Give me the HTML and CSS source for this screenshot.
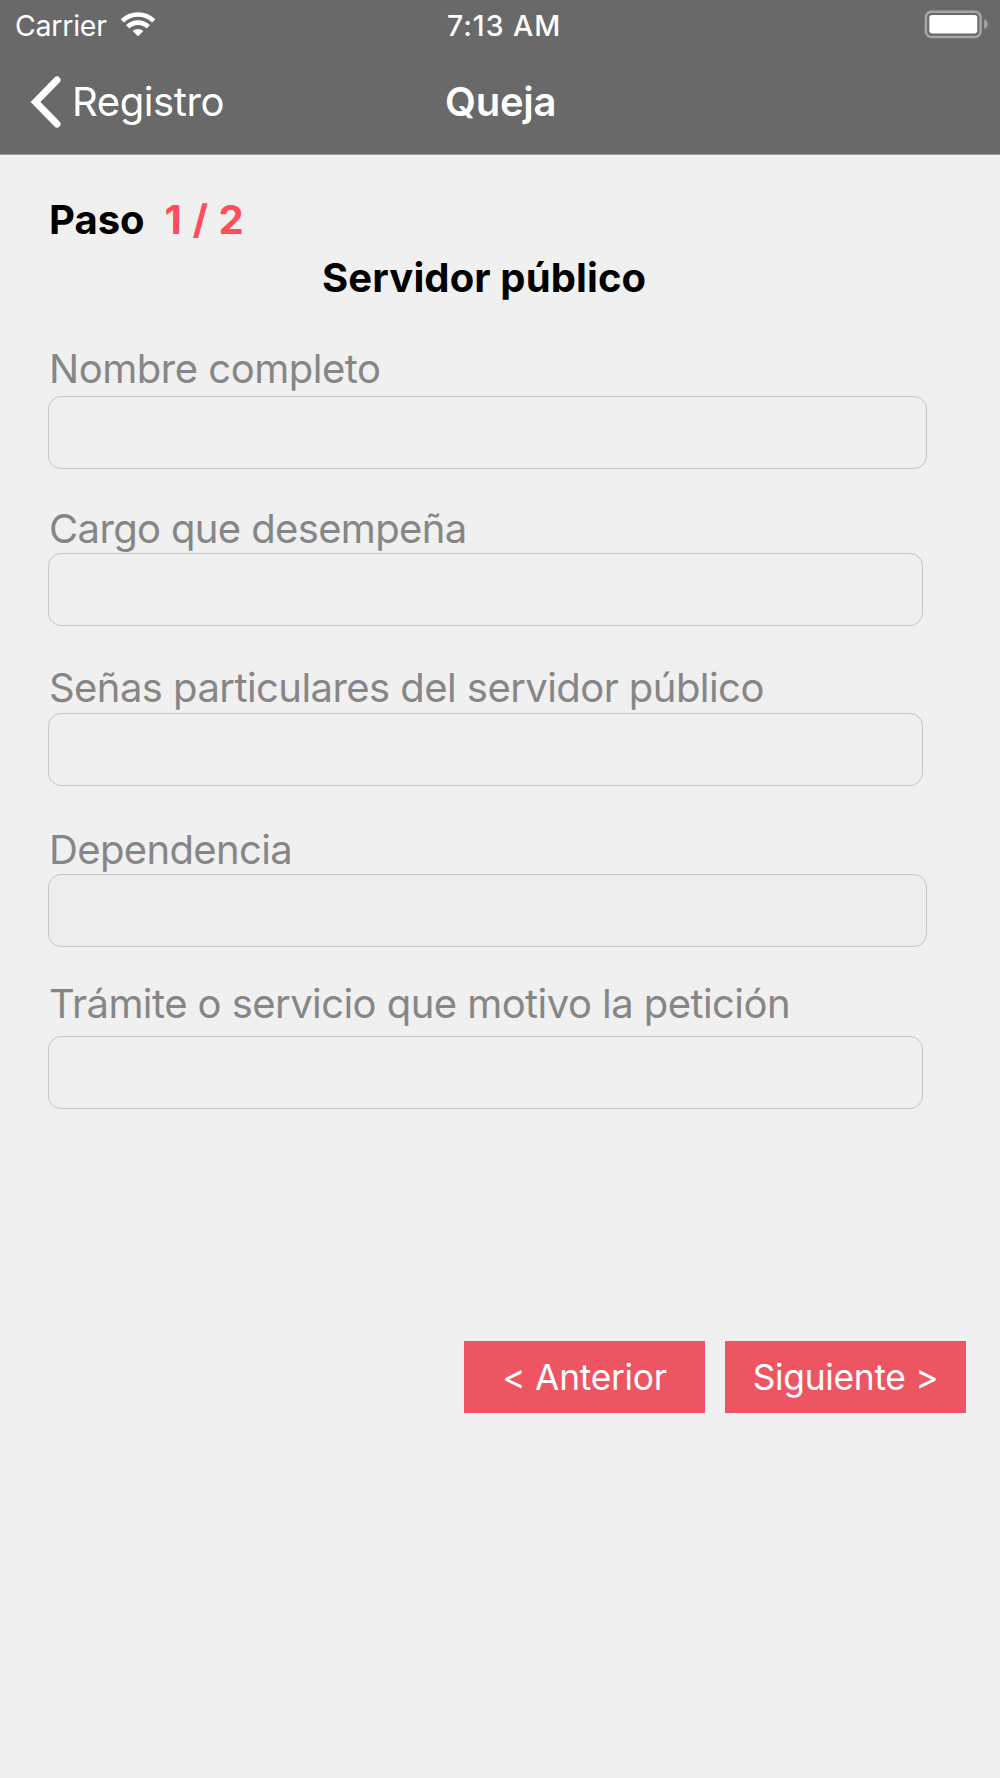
FILE: index.html
```html
<!DOCTYPE html>
<html lang="es">
<head>
<meta charset="utf-8">
<title>Queja</title>
<link rel="stylesheet" href="styles.css">
</head>
<body>
<header class="header">
  <div class="status">
    <div class="status-left">
      <span class="carrier">Carrier</span>
      <svg class="wifi" width="36" height="26" viewBox="0 0 36 26" fill="none" stroke="#fff" stroke-width="4.7">
        <path d="M2.3 9.9A22.4 22.4 0 0 1 33.7 9.9"/>
        <path d="M7.7 15.8A14.8 14.8 0 0 1 28.3 15.8"/>
        <path d="M12.7 20.1A7.6 7.6 0 0 1 23.3 20.1L18.6 24.8Q18 25.2 17.4 24.8Z" fill="#fff" stroke="none"/>
      </svg>
    </div>
    <span class="time">7:13 AM</span>
    <svg class="battery" width="65" height="30" viewBox="0 0 65 30">
      <rect x="1.9" y="1.7" width="54.6" height="25.2" rx="5.5" fill="none" stroke="#a6a6a6" stroke-width="2.5"/>
      <rect x="5.3" y="5" width="48" height="18.4" rx="2.8" fill="#fff"/>
      <path d="M60.2 9.3Q63.6 10.8 63.6 14.2T60.2 19.1Z" fill="#a6a6a6"/>
    </svg>
  </div>
  <nav class="nav">
    <a class="back">
      <svg width="34" height="54" viewBox="0 0 34 54" fill="none" stroke="#fff" stroke-width="7" stroke-linecap="round">
        <path d="M29 5L7.5 27L29 49"/>
      </svg>
      <span>Registro</span>
    </a>
    <h1 class="nav-title">Queja</h1>
  </nav>
</header>
<main class="content">
  <p class="step">Paso <span class="step-count">1 / 2</span></p>
  <h2 class="section-title">Servidor público</h2>
  <form class="form">
    <div class="field name">
      <label for="nombre">Nombre completo</label>
      <input id="nombre" class="wide">
    </div>
    <div class="field position">
      <label for="cargo">Cargo que desempeña</label>
      <input id="cargo">
    </div>
    <div class="field traits">
      <label for="senas">Señas particulares del servidor público</label>
      <input id="senas">
    </div>
    <div class="field agency">
      <label for="dependencia">Dependencia</label>
      <input id="dependencia" class="wide shaded">
    </div>
    <div class="field service">
      <label for="tramite">Trámite o servicio que motivo la petición</label>
      <input id="tramite">
    </div>
    <div class="actions">
      <button type="button">&lt; Anterior</button>
      <button type="button">Siguiente &gt;</button>
    </div>
  </form>
</main>
</body>
</html>
```
FILE: styles.css
```css
* {
  box-sizing: border-box;
}

body {
  margin: 0;
  min-height: 1778px;
  background: #f0f0f0;
  color: #000;
  font-family: Inter, "Liberation Sans", sans-serif;
  font-size: 40px;
  line-height: 48px;
}

h1, h2, p {
  margin: 0;
}

.header {
  height: 155px;
  background: #696969;
  border-bottom: 1px solid #9c9c9c;
  color: #fff;
}

.status {
  display: grid;
  grid-template-columns: 447px 1fr auto;
  height: 50px;
  padding-right: 11px;
  font-size: 28.5px;
  line-height: 34px;
}

.status-left {
  display: flex;
  gap: 12px;
  padding: 9px 0 0 15px;
}

.carrier {
  width: 93px;
  letter-spacing: -0.25px;
}

.wifi {
  margin-top: 2px;
}

.time {
  padding-top: 9px;
  font-weight: 500;
  letter-spacing: 0.95px;
}

.battery {
  margin-top: 10px;
}

.nav {
  display: grid;
  grid-template-columns: 445px 1fr;
  padding-top: 25px;
}

.back {
  display: flex;
  gap: 10px;
  padding-left: 28px;
  letter-spacing: -0.4px;
}

.back span {
  padding-top: 3px;
}

.nav-title {
  padding-top: 3px;
  font-size: 40px;
  font-weight: 600;
  letter-spacing: -0.26px;
}

.content {
  padding: 41px 34px 0 48px;
}

.step {
  display: flex;
  gap: 20px;
  padding-left: 1px;
  font-weight: 700;
}

.step-count {
  color: #ff4d5c;
  letter-spacing: 0.57px;
}

.section-title {
  margin-top: 10px;
  padding-left: 274px;
  font-size: 40px;
  font-weight: 700;
  letter-spacing: 0.12px;
}

.field {
  display: flex;
  flex-direction: column;
  color: #868686;
  letter-spacing: -0.56px;
}

.field label {
  padding-left: 1px;
}

.field input {
  width: 875px;
  height: 73px;
  padding: 0 16px;
  border: 1px solid #c6c6c6;
  border-radius: 13px;
  background: transparent;
  font: inherit;
}

.field .wide {
  width: 879px;
}

.field .shaded {
  background: #ededed;
}

.name {
  margin-top: 43px;
  gap: 3px;
  letter-spacing: -0.48px;
}

.position {
  margin-top: 36px;
  letter-spacing: -0.64px;
}

.traits {
  margin-top: 38px;
  gap: 1px;
}

.agency {
  margin-top: 40px;
  letter-spacing: -0.64px;
}

.service {
  margin-top: 33px;
  gap: 8px;
}

.actions {
  display: flex;
  justify-content: flex-end;
  gap: 20px;
  margin-top: 232px;
}

.actions button {
  width: 241px;
  height: 72px;
  padding: 1px 0 0;
  border: 0;
  background: #ee5563;
  color: #fff;
  font: 400 35.3px/71px Inter, "Liberation Sans", sans-serif;
  letter-spacing: -0.28px;
}
```
